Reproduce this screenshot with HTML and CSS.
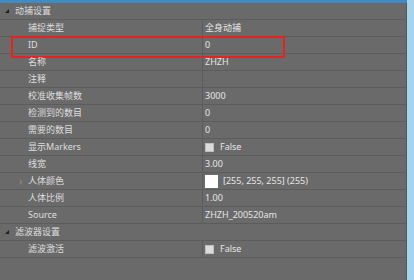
FILE: index.html
```html
<!DOCTYPE html>
<html lang="zh-CN">
<head>
    <meta charset="UTF-8">
    <meta name="viewport" content="width=device-width, initial-scale=1.0">
    <title>属性</title>
    <link rel="stylesheet" href="styles.css">
</head>
<body>
    <div class="window">
        <div class="panel">
            <div class="topbar"></div>
            <div class="group"><span class="fold"></span>动捕设置</div>
            <div class="row"><div class="name">捕捉类型</div><div class="value">全身动捕</div></div>
            <div class="row marked"><div class="name">ID</div><div class="value">0</div></div>
            <div class="row"><div class="name">名称</div><div class="value">ZHZH</div></div>
            <div class="row"><div class="name">注释</div><div class="value"></div></div>
            <div class="row"><div class="name">校准收集帧数</div><div class="value">3000</div></div>
            <div class="row"><div class="name">检测到的数目</div><div class="value">0</div></div>
            <div class="row"><div class="name">需要的数目</div><div class="value">0</div></div>
            <div class="row"><div class="name">显示Markers</div><div class="value"><span class="check"></span>False</div></div>
            <div class="row"><div class="name">线宽</div><div class="value">3.00</div></div>
            <div class="row"><div class="name"><span class="expand">›</span>人体颜色</div><div class="value"><span class="swatch"></span>[255, 255, 255] (255)</div></div>
            <div class="row"><div class="name">人体比例</div><div class="value">1.00</div></div>
            <div class="row"><div class="name">Source</div><div class="value">ZHZH_200520am</div></div>
            <div class="group"><span class="fold"></span>滤波器设置</div>
            <div class="row"><div class="name">滤波激活</div><div class="value"><span class="check"></span>False</div></div>
        </div>
        <div class="edge"></div>
    </div>
</body>
</html>
```

FILE: styles.css
```css
* { box-sizing: border-box; }
html, body { margin: 0; height: 100%; }
body { background: #6a6a6a; font-family: "Noto Sans", "Noto Sans CJK SC", sans-serif; font-size: 9px; color: #dedede; }
.window { display: flex; height: 280px; }
.panel { flex: 1; border-right: 1px solid #585858; }
.edge { width: 7px; background: #a6d4ef; }
.topbar { height: 3px; background: #3d8cc6; margin-right: -8px; }

.group { height: 17px; line-height: 16px; padding-left: 15px; border-bottom: 1px solid #5c5c5c; position: relative; }
.fold { position: absolute; left: 5px; top: 6px; width: 0; height: 0; border-left: 4px solid transparent; border-bottom: 4px solid #1e1e1e; }

.row { display: grid; grid-template-columns: 202px 1fr; height: 17px; line-height: 16px; border-bottom: 1px solid #5c5c5c; position: relative; }
.name { padding-left: 28px; position: relative; }
.value { border-left: 1px solid #5c5c5c; padding-left: 2px; display: flex; align-items: center; color: #e6e6e6; }

.expand { position: absolute; left: 19px; top: 0; color: #8a8a8a; font-size: 11px; }
.check { width: 9px; height: 9px; background: #dcdcdc; border: 1px solid #bdbdbd; margin-right: 6px; }
.swatch { width: 13px; height: 13px; background: #fff; margin-right: 5px; }

.marked::after { content: ""; position: absolute; left: 11px; top: -1px; width: 270px; height: 18px; border: 2px solid #e8231d; }
```
